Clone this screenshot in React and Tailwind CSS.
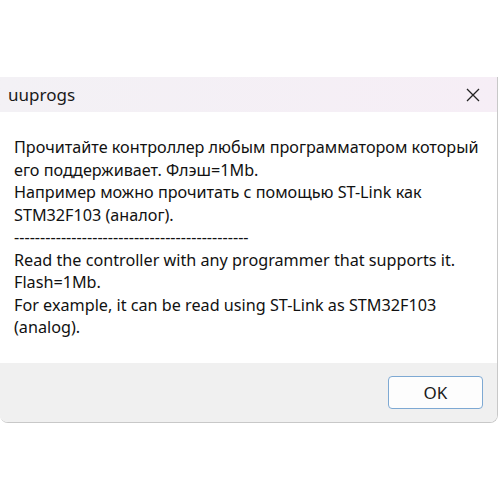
export default function App() {
  const font = { fontFamily: '"Noto Sans", "Open Sans", sans-serif' };
  return (
    <div className="w-[500px] h-[500px] bg-white relative overflow-hidden" style={font}>
      <div className="pt-[77px]">
        <div className="w-[498px] rounded-b-[8px] border-r border-b border-[#c8c8c8] overflow-hidden">
          <div className="h-[35px] bg-gradient-to-r from-[#f3f1f5] to-[#f6eef6] flex items-center justify-between pl-[8px] pr-[16px]">
            <span className="text-[17px] text-[#1a1a1a] leading-none">uuprogs</span>
            <svg width="14" height="14" viewBox="0 0 14 14" className="mr-[1px]">
              <path d="M1 1 L13 13 M13 1 L1 13" stroke="#222" strokeWidth="1.3" />
            </svg>
          </div>
          <div className="bg-white h-[251px] pl-[14px] pt-[24px] text-[16.2px] leading-[22.5px] text-[#111]">
            <div>Прочитайте контроллер любым программатором который</div>
            <div>его поддерживает. Флэш=1Mb.</div>
            <div>Например можно прочитать с помощью ST-Link как</div>
            <div>STM32F103 (аналог).</div>
            <div>---------------------------------------------</div>
            <div>Read the controller with any programmer that supports it.</div>
            <div>Flash=1Mb.</div>
            <div>For example, it can be read using ST-Link as STM32F103</div>
            <div>(analog).</div>
          </div>
          <div className="bg-[#f0f0f0] h-[59px] flex items-start justify-end pt-[13px] pr-[14px]">
            <div className="w-[95px] h-[33px] bg-[#fdfdfd] border border-[#7ea9d3] rounded-[4px] flex items-center justify-center text-[17px] text-[#1a1a1a]">
              OK
            </div>
          </div>
        </div>
      </div>
    </div>
  );
}
